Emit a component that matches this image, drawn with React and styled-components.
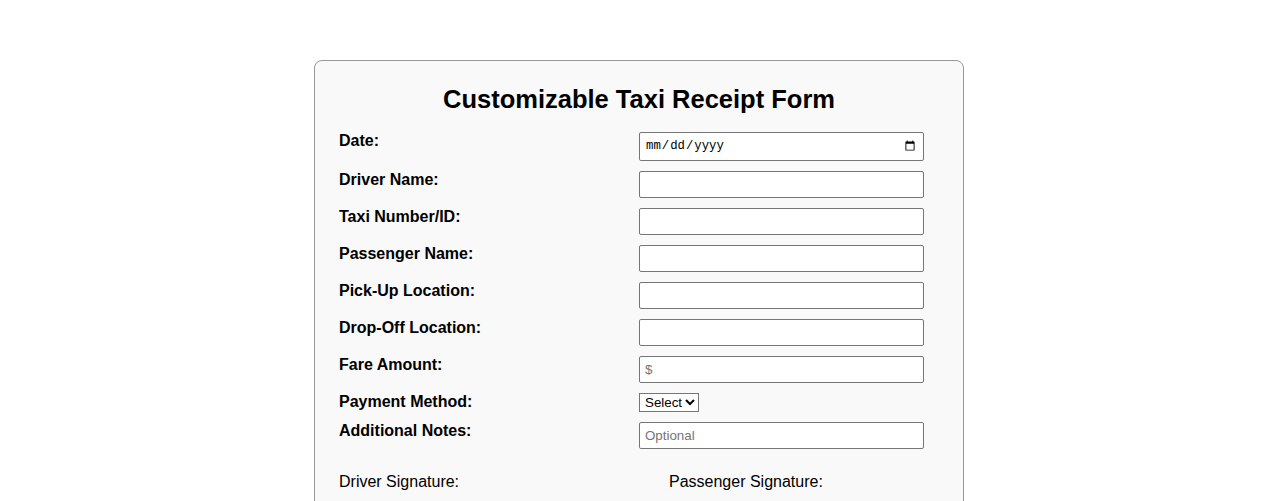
import React from 'react';
import styled, { createGlobalStyle } from 'styled-components';

const GlobalStyle = createGlobalStyle`
    body{
        margin:0;
        background:#fff;
        font-family:"Liberation Sans", Arial, sans-serif;
        color:#000;
    }
`

const Page = styled.div`
    padding:60px 0 40px;
`

const Card = styled.div`
    width:600px;
    margin:0 auto;
    padding:24px;
    background:#f9f9f9;
    border:1px solid #999;
    border-radius:8px;
`

const Title = styled.h2`
    margin:0 0 17px;
    text-align:center;
    font-size:25.5px;
    line-height:29px;
    font-weight:bold;
`

const Row = styled.div`
    display:flex;
    align-items:flex-start;
    margin-bottom:9px;
`

const Label = styled.label`
    flex:0 0 50%;
    padding-top:1px;
    font-size:16px;
    line-height:18px;
    font-weight:bold;
`

const Field = styled.div`
    flex:1;
    padding-top:1px;
`

const Input = styled.input`
    display:block;
    width:95%;
    height:${({ tall }) => tall ? '29px' : '27px'};
    box-sizing:border-box;
    margin:0;
    padding:5px;
    border:1px solid #767676;
    border-radius:2px;
    background:#fff;
    font-family:${({ mono }) => mono ? '"Liberation Mono", monospace' : '"Liberation Sans", Arial, sans-serif'};
    font-size:${({ mono }) => mono ? '12.3px' : '13.33px'};
    color:#000;
    outline:none;
    &::placeholder{
        color:#757575;
    }
`

const Select = styled.select`
    display:block;
    width:60px;
    height:19px;
    margin:0;
    padding:0 0 0 1px;
    border:1px solid #767676;
    border-radius:0;
    background:#fff;
    font-family:"Liberation Sans", Arial, sans-serif;
    font-size:13.33px;
    color:#000;
`

const Signatures = styled.div`
    display:flex;
    justify-content:space-between;
    margin-top:24px;
`

const SignBlock = styled.div`
    width:45%;
    font-size:16px;
    line-height:18px;
`

const SignLine = styled.div`
    height:40px;
    border-bottom:1px solid #000;
`

const fields = [
    { label: 'Driver Name:' },
    { label: 'Taxi Number/ID:' },
    { label: 'Passenger Name:' },
    { label: 'Pick-Up Location:' },
    { label: 'Drop-Off Location:' },
    { label: 'Fare Amount:', placeholder: '$' },
]

export default function App() {
    return (
        <Page>
            <GlobalStyle />
            <Card>
                <Title>Customizable Taxi Receipt Form</Title>
                <Row>
                    <Label>Date:</Label>
                    <Field>
                        <Input type="date" tall mono />
                    </Field>
                </Row>
                {fields.map(f => (
                    <Row key={f.label}>
                        <Label>{f.label}</Label>
                        <Field>
                            <Input type="text" placeholder={f.placeholder} />
                        </Field>
                    </Row>
                ))}
                <Row>
                    <Label>Payment Method:</Label>
                    <Field>
                        <Select defaultValue="">
                            <option value="">Select</option>
                            <option>Cash</option>
                            <option>Card</option>
                            <option>Mobile</option>
                        </Select>
                    </Field>
                </Row>
                <Row>
                    <Label>Additional Notes:</Label>
                    <Field>
                        <Input type="text" placeholder="Optional" />
                    </Field>
                </Row>
                <Signatures>
                    <SignBlock>
                        Driver Signature:
                        <SignLine />
                    </SignBlock>
                    <SignBlock>
                        Passenger Signature:
                        <SignLine />
                    </SignBlock>
                </Signatures>
            </Card>
        </Page>
    )
}
